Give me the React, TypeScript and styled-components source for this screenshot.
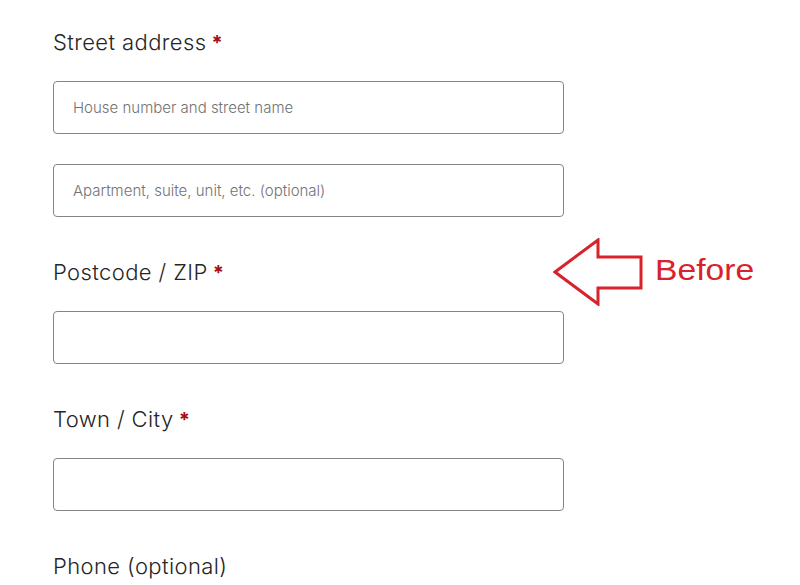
import React from "react";
import styled, { createGlobalStyle } from "styled-components";

const Global = createGlobalStyle`
  html, body { margin: 0; padding: 0; background: #ffffff; }
  body { font-family: Inter, "Noto Sans", sans-serif; }
`;

const Page = styled.div`
  position: relative;
  width: 800px;
  height: 585px;
  overflow: hidden;
  background: #fff;
  padding: 27px 0 0 53px;
  box-sizing: border-box;
`;

const Form = styled.form`
  width: 511px;
  display: flex;
  flex-direction: column;
  gap: 40px;
`;

const Field = styled.div`
  display: flex;
  flex-direction: column;
`;

const Label = styled.label`
  display: block;
  height: 30px;
  font-family: Inter, "Noto Sans", sans-serif;
  font-size: 22px;
  font-weight: 350;
  line-height: 30px;
  color: #262626;
  letter-spacing: 0.4px;
  margin-bottom: 24px;
`;

const Req = styled.span`
  color: #a30f14;
  font-weight: 700;
  font-size: 20px;
  line-height: 0;
  margin-left: 5px;
`;

const Inputs = styled.div`
  display: flex;
  flex-direction: column;
  gap: 30px;
`;

const Input = styled.input`
  box-sizing: border-box;
  width: 511px;
  height: 53px;
  border: 1px solid #858585;
  border-radius: 4px;
  padding: 0 19px;
  font-family: Inter, "Noto Sans", sans-serif;
  font-size: 15px;
  font-weight: 350;
  color: #333;
  background: #fff;
  outline: none;
  &::placeholder {
    color: #727272;
    opacity: 1;
  }
`;

const Annotation = styled.div`
  position: absolute;
  left: 553px;
  top: 238px;
  display: flex;
  align-items: center;
  gap: 10px;
`;

const Arrow = styled.svg`
  display: block;
`;

const Note = styled.span`
  font-family: "Liberation Sans", Arial, sans-serif;
  font-size: 29px;
  color: #d8222c;
  display: inline-block;
  transform: scaleX(1.16);
  transform-origin: left center;
  margin-top: -4px;
`;

export default function App() {
  return (
    <>
      <Global />
      <Page>
        <Form>
          <Field>
            <Label>
              Street address<Req>*</Req>
            </Label>
            <Inputs>
              <Input placeholder="House number and street name" />
              <Input placeholder="Apartment, suite, unit, etc. (optional)" />
            </Inputs>
          </Field>
          <Field>
            <Label>
              Postcode / ZIP<Req>*</Req>
            </Label>
            <Input />
          </Field>
          <Field>
            <Label>
              Town / City<Req>*</Req>
            </Label>
            <Input />
          </Field>
          <Field>
            <Label>Phone (optional)</Label>
            <Input />
          </Field>
        </Form>
        <Annotation>
          <Arrow width="92" height="68" viewBox="0 0 92 68">
            <path
              d="M2 34 L45 2 L45 19 L88 19 L88 50 L45 50 L45 66 Z"
              fill="none"
              stroke="#d8222c"
              strokeWidth="3"
              strokeLinejoin="miter"
            />
          </Arrow>
          <Note>Before</Note>
        </Annotation>
      </Page>
    </>
  );
}
